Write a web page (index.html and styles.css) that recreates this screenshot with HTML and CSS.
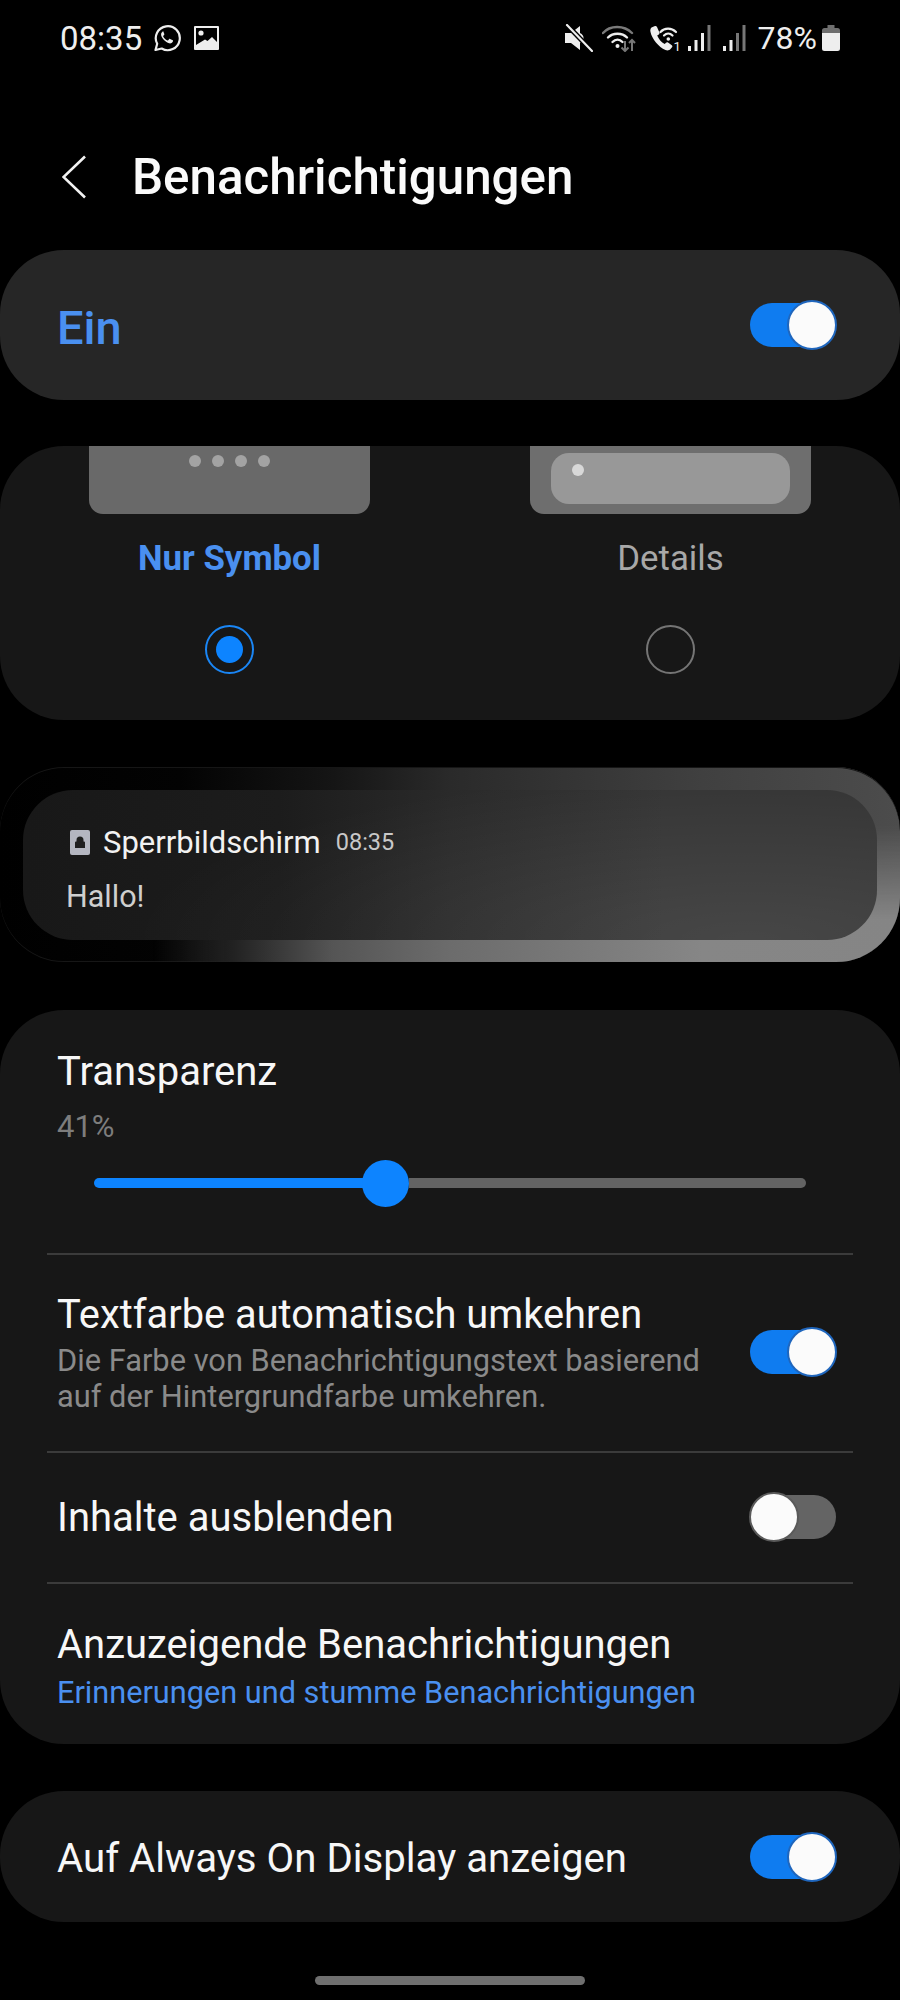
FILE: index.html
```html
<!DOCTYPE html>
<html lang="de">
<head>
<meta charset="utf-8">
<title>Benachrichtigungen</title>
<link rel="stylesheet" href="styles.css">
</head>
<body>
<div class="page">
  <div class="status">
    <div class="status-left">
      <span class="clock">08:35</span>
      <svg class="ic-wa" viewBox="0 0 28 28"><path d="M2.500 26l1.700-6.200A12 12 0 1 1 8.700 24.500z" fill="none" stroke="#eee" stroke-width="2.200" stroke-linejoin="round"/><path d="M10 7.500c-1 .3-2.200 1.800-1.900 3.600.5 3 4.500 7.400 8 8.200 1.900.4 3.500-.6 3.900-2 .1-.5.100-.9-.2-1.100l-2.700-1.300c-.4-.2-.7-.1-.9.200l-1 1.200c-.2.200-.5.300-.8.100-2-.9-3.300-2.200-4.200-4-.1-.3 0-.5.200-.7l.8-1c.2-.3.200-.5.100-.8l-1.100-2.600c-.1-.3-.3-.4-.6-.4z" fill="#eee"/></svg>
      <svg class="ic-pic" viewBox="0 0 25 24"><path d="M1 0h23a1 1 0 0 1 1 1v22a1 1 0 0 1-1 1H1a1 1 0 0 1-1-1V1a1 1 0 0 1 1-1z" fill="#eee"/><path d="M2 2h21v14l-5-5-4.500 4-2.500-1.500L2 19z" fill="#000"/><circle cx="7" cy="7" r="2.600" fill="#eee"/></svg>
    </div>
    <div class="status-right">
      <svg class="ic-mute" viewBox="0 0 28 28"><path d="M0 9h6l9-7v24l-9-7H0z" fill="#eee"/><path d="M15 9c2.500 1 3.500 3 3.500 5s-1 4-3.500 5z" fill="#eee"/><path d="M2 1l25 26" stroke="#000" stroke-width="5"/><path d="M2 1l25 26" stroke="#eee" stroke-width="2.200" stroke-linecap="round"/></svg>
      <svg class="ic-wifi" viewBox="0 0 34 28"><path d="M1 9C8 1 22 1 30 9" fill="none" stroke="#7a7a7a" stroke-width="2.400" stroke-linecap="round"/><path d="M6 13.500c5-5 14-5 19 0" fill="none" stroke="#eee" stroke-width="2.400" stroke-linecap="round"/><path d="M10.500 18c3-3 7-3 10 0" fill="none" stroke="#eee" stroke-width="2.400" stroke-linecap="round"/><circle cx="15.500" cy="22" r="2" fill="#eee"/><path d="M23 17v10M19.500 23.500l3.500 3.500 3.500-3.500" fill="none" stroke="#777" stroke-width="2"/><path d="M30 27V16M27 19l3-3 3 3" fill="none" stroke="#777" stroke-width="2"/></svg>
      <svg class="ic-call" viewBox="0 0 32 28"><path d="M2 3.500C1 4.500.500 6 1 8c1.500 7 8 15 15 18 2 .8 3.800.3 4.800-.8l1.700-2c.6-.7.500-1.500-.2-2l-3.800-2.700c-.7-.5-1.400-.4-2 .2l-1.300 1.400c-3.500-1.800-6-5-7.500-8.500l1.600-1.200c.7-.6.900-1.300.5-2.100L7.500 3c-.4-.8-1.300-1.200-2-.9z" fill="#eee"/><path d="M11 8c4-4.500 11-4.500 15.500 0" fill="none" stroke="#eee" stroke-width="2.200" stroke-linecap="round"/><path d="M14.500 11.500c2.500-2.500 6-2.500 8.500 0" fill="none" stroke="#eee" stroke-width="2.200" stroke-linecap="round"/><circle cx="18.800" cy="15" r="1.800" fill="#eee"/><text x="24" y="26.500" class="sim">1</text></svg>
      <svg class="ic-sig" viewBox="0 0 23 26"><rect x="0" y="21" width="3" height="5" fill="#eee"/><rect x="6.500" y="15" width="3" height="11" fill="#eee"/><rect x="13" y="8" width="3" height="18" fill="#eee"/><rect x="19.500" y="0" width="3" height="26" fill="#777"/></svg>
      <svg class="ic-sig sig2" viewBox="0 0 23 26"><rect x="0" y="21" width="3" height="5" fill="#eee"/><rect x="6.500" y="15" width="3" height="11" fill="#eee"/><rect x="13" y="8" width="3" height="18" fill="#777"/><rect x="19.500" y="0" width="3" height="26" fill="#777"/></svg>
      <span class="pct">78%</span>
      <svg class="ic-bat" viewBox="0 0 18 26"><path d="M5.500 0h7v3h3a2.500 2.500 0 0 1 2.500 2.500V8H0V5.500A2.500 2.500 0 0 1 2.500 3h3z" fill="#6e6e6e"/><path d="M0 8h18v15.500a2.500 2.500 0 0 1-2.500 2.500h-13A2.500 2.500 0 0 1 0 23.500z" fill="#eee"/></svg>
    </div>
  </div>

  <div class="header">
    <svg class="back" viewBox="0 0 24 44"><path d="M23 1.500L1.500 22 23 42.500" fill="none" stroke="#f2f2f2" stroke-width="2.600"/></svg>
    <h1 class="title">Benachrichtigungen</h1>
  </div>

  <section class="card card-ein">
    <span class="ein-label">Ein</span>
    <span class="toggle on"><span class="knob"></span></span>
  </section>

  <section class="card card-mode">
    <div class="mode">
      <div class="thumb thumb-icon"><span class="dot"></span><span class="dot"></span><span class="dot"></span><span class="dot"></span></div>
      <div class="mode-label selected">Nur Symbol</div>
      <span class="radio radio-on"><span class="radio-dot"></span></span>
    </div>
    <div class="mode">
      <div class="thumb thumb-detail"><div class="thumb-inner"><span class="dot dot-light"></span></div></div>
      <div class="mode-label">Details</div>
      <span class="radio"></span>
    </div>
  </section>

  <section class="preview">
    <div class="notice">
      <div class="notice-head">
        <svg class="ic-lock" viewBox="0 0 20 25"><rect width="20" height="25" rx="2" fill="#b4b6c0"/><path d="M5 18v-5.500a1 1 0 0 1 1-1h.5V10a3.500 3.500 0 0 1 7 0v1.500h.5a1 1 0 0 1 1 1V18z" fill="#1f1f1f"/></svg>
        <span class="notice-app">Sperrbildschirm</span>
        <span class="notice-time">08:35</span>
      </div>
      <div class="notice-text">Hallo!</div>
    </div>
  </section>

  <section class="card card-list">
    <div class="row row-slider">
      <div class="row-title">Transparenz</div>
      <div class="row-value">41%</div>
      <div class="slider">
        <div class="slider-fill"></div>
        <div class="slider-thumb"></div>
        <div class="slider-rest"></div>
      </div>
    </div>
    <div class="row row-switch row-auto">
      <div class="row-body">
        <div class="row-title">Textfarbe automatisch umkehren</div>
        <div class="row-sub">Die Farbe von Benachrichtigungstext basierend<br>auf der Hintergrundfarbe umkehren.</div>
      </div>
      <span class="toggle on"><span class="knob"></span></span>
    </div>
    <div class="row row-switch row-hide">
      <div class="row-title">Inhalte ausblenden</div>
      <span class="toggle off"><span class="knob"></span></span>
    </div>
    <div class="row row-last">
      <div class="row-title">Anzuzeigende Benachrichtigungen</div>
      <div class="row-link">Erinnerungen und stumme Benachrichtigungen</div>
    </div>
  </section>

  <section class="card card-aod">
    <div class="row-title">Auf Always On Display anzeigen</div>
    <span class="toggle on"><span class="knob"></span></span>
  </section>

  <div class="home-bar"></div>
</div>
</body>
</html>
```
FILE: styles.css
```css
* { box-sizing: border-box; }
html, body { margin: 0; padding: 0; background: #000; }
body { font-family: Roboto, "Noto Sans", sans-serif; color: #f5f5f5; }
.page { width: 900px; height: 2000px; display: flex; flex-direction: column; overflow: hidden; }

.status { height: 76px; padding: 0 60px; display: flex; justify-content: space-between; align-items: center; }
.status-left, .status-right { display: flex; align-items: center; }
.clock { font-size: 33px; color: #eee; margin-right: 11px; }
.ic-wa { width: 28px; height: 28px; margin-right: 13px; }
.ic-pic { width: 25px; height: 24px; }
.ic-mute { width: 28px; height: 28px; margin-right: 9px; }
.ic-wifi { width: 34px; height: 28px; margin-right: 13px; }
.ic-call { width: 33px; height: 28px; margin-right: 6px; }
.sim { font-size: 13px; fill: #eee; font-family: Roboto, sans-serif; }
.ic-sig { width: 23px; height: 26px; margin-right: 12px; }
.pct { font-size: 32px; color: #eee; margin-right: 5px; }
.ic-bat { width: 18px; height: 26px; }

.header { height: 174px; padding: 27px 0 0 62px; display: flex; align-items: center; }
.back { width: 24px; height: 44px; margin-right: 46px; }
.title { font-size: 49.300px; font-weight: 500; margin: 0; color: #fafafa; }

.card { background: #171717; border-radius: 64px; }
.card-ein { height: 150px; background: #262626; padding: 4px 64px 0 57px; display: flex; align-items: center; justify-content: space-between; margin-bottom: 46px; }
.ein-label { font-size: 47px; font-weight: 500; color: #4a90f0; }
.card-ein .toggle { margin-top: -5px; }

.toggle { display: block; width: 86px; height: 44px; border-radius: 22px; position: relative; flex: none; }
.toggle.on { background: #0f7cf0; }
.toggle.off { background: #646464; }
.knob { position: absolute; top: -3px; width: 50px; height: 50px; border-radius: 50%; background: #fbfbfb; }
.on .knob { right: -1px; border: 2px solid #1f66bd; }
.off .knob { left: -1px; border: 2px solid #5a5a5a; }

.card-mode { height: 274px; display: flex; margin-bottom: 47px; overflow: hidden; }
.mode { display: flex; flex-direction: column; align-items: center; }
.mode:first-child { margin-left: 89px; width: 281px; }
.mode:last-child { margin-left: 160px; width: 281px; }
.thumb { width: 281px; height: 68px; border-radius: 0 0 14px 14px; display: flex; flex: none; }
.thumb-icon { background: #696969; justify-content: center; gap: 11px; padding-top: 9px; }
.thumb-detail { background: #6e6e6e; padding: 7px 21px 10px; }
.thumb-inner { flex: 1; background: #989898; border-radius: 18px; padding: 11px 0 0 21px; }
.dot { display: block; width: 12px; height: 12px; border-radius: 50%; background: #a3a3a3; }
.dot-light { background: #d8d8d8; }
.mode-label { font-size: 34.800px; color: #a8a8a8; margin-top: 23px; height: 42px; line-height: 42px; white-space: nowrap; }
.mode-label.selected { color: #4a90f0; font-weight: 700; }
.radio { display: flex; align-items: center; justify-content: center; width: 49px; height: 49px; border-radius: 50%; border: 2.500px solid #757575; margin-top: 46px; }
.radio-on { border-color: #1a86f5; }
.radio-dot { width: 27px; height: 27px; border-radius: 50%; background: #0d84ff; }

.preview { height: 195px; margin-bottom: 48px; border-radius: 64px; padding: 23px; position: relative; overflow: hidden; background: linear-gradient(to right, #000 0%, #030303 20%, #151515 37%, #2a2a2a 50%, #404040 78%, #4c4c4c 100%); box-shadow: inset 0 1px 0 #161616, inset 0 -1px 0 #161616; }
.preview::before { content: ""; position: absolute; inset: 0; background: linear-gradient(to right, rgba(0,0,0,0) 17%, #222 26%, #555 37%, #6c6c6c 50%, #868686 78%, #858585 100%); -webkit-mask-image: linear-gradient(to bottom, transparent 30%, #000 78%); mask-image: linear-gradient(to bottom, transparent 30%, #000 78%); }
.notice { position: relative; height: 150px; border-radius: 50px; background: radial-gradient(ellipse 620px 170px at 85% 100%, rgba(255,255,255,.085), rgba(255,255,255,0)), linear-gradient(to right, #181818 0%, #1c1c1c 30%, #2a2a2a 50%, #353535 75%, #353535 100%); padding: 39px 0 0 43px; }
.notice-head { display: flex; align-items: center; height: 26px; padding-left: 4px; }
.ic-lock { width: 20px; height: 25px; margin-right: 13px; }
.notice-app { font-size: 31px; color: #f2f2f2; margin-right: 15px; }
.notice-time { font-size: 23.500px; color: #c8c8c8; }
.notice-text { font-size: 30.500px; color: #cfcfcf; margin-top: 24px; line-height: 36px; }

.card-list { height: 734px; margin-bottom: 47px; padding: 0 47px; display: flex; flex-direction: column; }
.row-title { font-size: 40px; color: #f7f7f7; line-height: 44px; white-space: nowrap; }
.row { border-bottom: 2px solid #3b3b3b; padding: 0 10px; flex: none; }
.row-slider { height: 245px; padding-top: 40px; }
.row-value { font-size: 31px; color: #7d7d7d; line-height: 36px; margin-top: 15px; }
.slider { display: flex; align-items: center; height: 48px; margin: 14px 37px 0; }
.slider-fill { width: 273px; height: 10px; background: #0d84ff; border-radius: 5px 0 0 5px; margin-right: -5px; }
.slider-thumb { width: 47px; height: 47px; border-radius: 50%; background: #0d84ff; flex: none; position: relative; }
.slider-rest { flex: 1; height: 10px; background: #636363; border-radius: 0 5px 5px 0; }
.row-switch { display: flex; align-items: center; justify-content: space-between; padding-right: 17px; }
.row-switch .toggle { margin-top: -2px; }
.row-auto { height: 198px; }
.row-body { margin-top: 2px; }
.row-body .row-title { font-size: 39.800px; }
.row-sub { font-size: 30.800px; color: #8a8a8a; line-height: 36px; margin-top: 6px; }
.row-hide { height: 131px; }
.row-last { border-bottom: 0; padding-top: 39px; }
.row-link { font-size: 30.700px; color: #4a90f0; line-height: 36px; margin-top: 8px; white-space: nowrap; }

.card-aod { height: 131px; padding: 4px 64px 0 57px; display: flex; align-items: center; justify-content: space-between; }
.card-aod .toggle { margin-top: -4px; }
.card-aod .row-title { font-size: 40.200px; }

.home-bar { width: 270px; height: 9px; border-radius: 5px; background: #6f6f6f; margin: 54px auto 0; }
```
